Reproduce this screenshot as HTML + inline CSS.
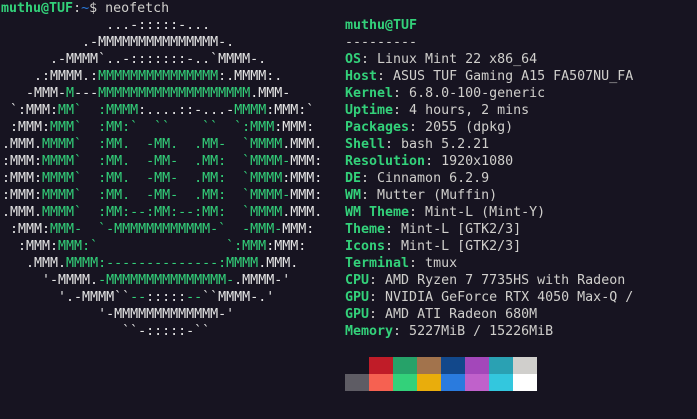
<!DOCTYPE html>
<html><head><meta charset="utf-8"><style>
html,body{margin:0;padding:0;background:#171421;width:697px;height:419px;overflow:hidden}
pre{position:absolute;margin:0;font-family:"DejaVu Sans Mono","Liberation Mono",monospace;font-size:13.3px;line-height:17px;color:#d0cfcc;white-space:pre}
.g{color:#33d17a}
.b{color:#33d17a;font-weight:bold}
.bl{color:#2a7bde}
.w{color:#e6e6e6}
.pal span{display:inline-block;width:24px;height:17px;vertical-align:top}
</style></head><body>
<pre style="left:1px;top:0"><span class="b">muthu@TUF</span>:<span class="bl">~</span>$ neofetch</pre>
<pre style="left:2px;top:17px"><span class="w">             ...-:::::-...
          .-MMMMMMMMMMMMMMM-.
      .-MMMM`..-:::::::-..`MMMM-.
    .:MMMM.:</span><span class="g">MMMMMMMMMMMMMMM</span><span class="w">:.MMMM:.
   -MMM-</span><span class="g">M</span><span class="w">---</span><span class="g">MMMMMMMMMMMMMMMMMMM</span><span class="w">.MMM-
 `:MMM:</span><span class="g">MM`  :MMMM</span><span class="w">:....::-...-</span><span class="g">MMMM</span><span class="w">:MMM:`
 :MMM:</span><span class="g">MMM`  :MM:`  ``    ``  `:MMM</span><span class="w">:MMM:
.MMM.</span><span class="g">MMMM`  :MM.  -MM.  .MM-  `MMMM</span><span class="w">.MMM.
:MMM:</span><span class="g">MMMM`  :MM.  -MM-  .MM:  `MMMM-</span><span class="w">MMM:
:MMM:</span><span class="g">MMMM`  :MM.  -MM-  .MM:  `MMMM</span><span class="w">:MMM:
:MMM:</span><span class="g">MMMM`  :MM.  -MM-  .MM:  `MMMM-</span><span class="w">MMM:
.MMM.</span><span class="g">MMMM`  :MM:--:MM:--:MM:  `MMMM</span><span class="w">.MMM.
 :MMM:</span><span class="g">MMM-  `-MMMMMMMMMMMM-`  -MMM-</span><span class="w">MMM:
  :MMM:</span><span class="g">MMM:`                `:MMM</span><span class="w">:MMM:
   .MMM.</span><span class="g">MMMM:--------------:MMMM</span><span class="w">.MMM.
     '-MMMM.</span><span class="g">-MMMMMMMMMMMMMMM-</span><span class="w">.MMMM-'
       '.-MMMM``</span><span class="g">--</span><span class="w">:::::</span><span class="g">--</span><span class="w">``MMMM-.'
            '-MMMMMMMMMMMMM-'
               ``-:::::-``</span></pre>
<pre style="left:345px;top:17px"><span class="b">muthu@TUF</span>
---------
<span class="b">OS</span>: Linux Mint 22 x86_64
<span class="b">Host</span>: ASUS TUF Gaming A15 FA507NU_FA
<span class="b">Kernel</span>: 6.8.0-100-generic
<span class="b">Uptime</span>: 4 hours, 2 mins
<span class="b">Packages</span>: 2055 (dpkg)
<span class="b">Shell</span>: bash 5.2.21
<span class="b">Resolution</span>: 1920x1080
<span class="b">DE</span>: Cinnamon 6.2.9
<span class="b">WM</span>: Mutter (Muffin)
<span class="b">WM Theme</span>: Mint-L (Mint-Y)
<span class="b">Theme</span>: Mint-L [GTK2/3]
<span class="b">Icons</span>: Mint-L [GTK2/3]
<span class="b">Terminal</span>: tmux
<span class="b">CPU</span>: AMD Ryzen 7 7735HS with Radeon
<span class="b">GPU</span>: NVIDIA GeForce RTX 4050 Max-Q /
<span class="b">GPU</span>: AMD ATI Radeon 680M
<span class="b">Memory</span>: 5227MiB / 15226MiB</pre>
<div class="pal" style="position:absolute;left:345px;top:357px;line-height:0;font-size:0">
<div><span style="background:#171421"></span><span style="background:#c01c28"></span><span style="background:#26a269"></span><span style="background:#a2734c"></span><span style="background:#12488b"></span><span style="background:#a347ba"></span><span style="background:#2aa1b3"></span><span style="background:#d0cfcc"></span></div>
<div><span style="background:#5e5c64"></span><span style="background:#f66151"></span><span style="background:#33d17a"></span><span style="background:#e9ad0c"></span><span style="background:#2a7bde"></span><span style="background:#c061cb"></span><span style="background:#33c7de"></span><span style="background:#ffffff"></span></div>
</div>
</body></html>
